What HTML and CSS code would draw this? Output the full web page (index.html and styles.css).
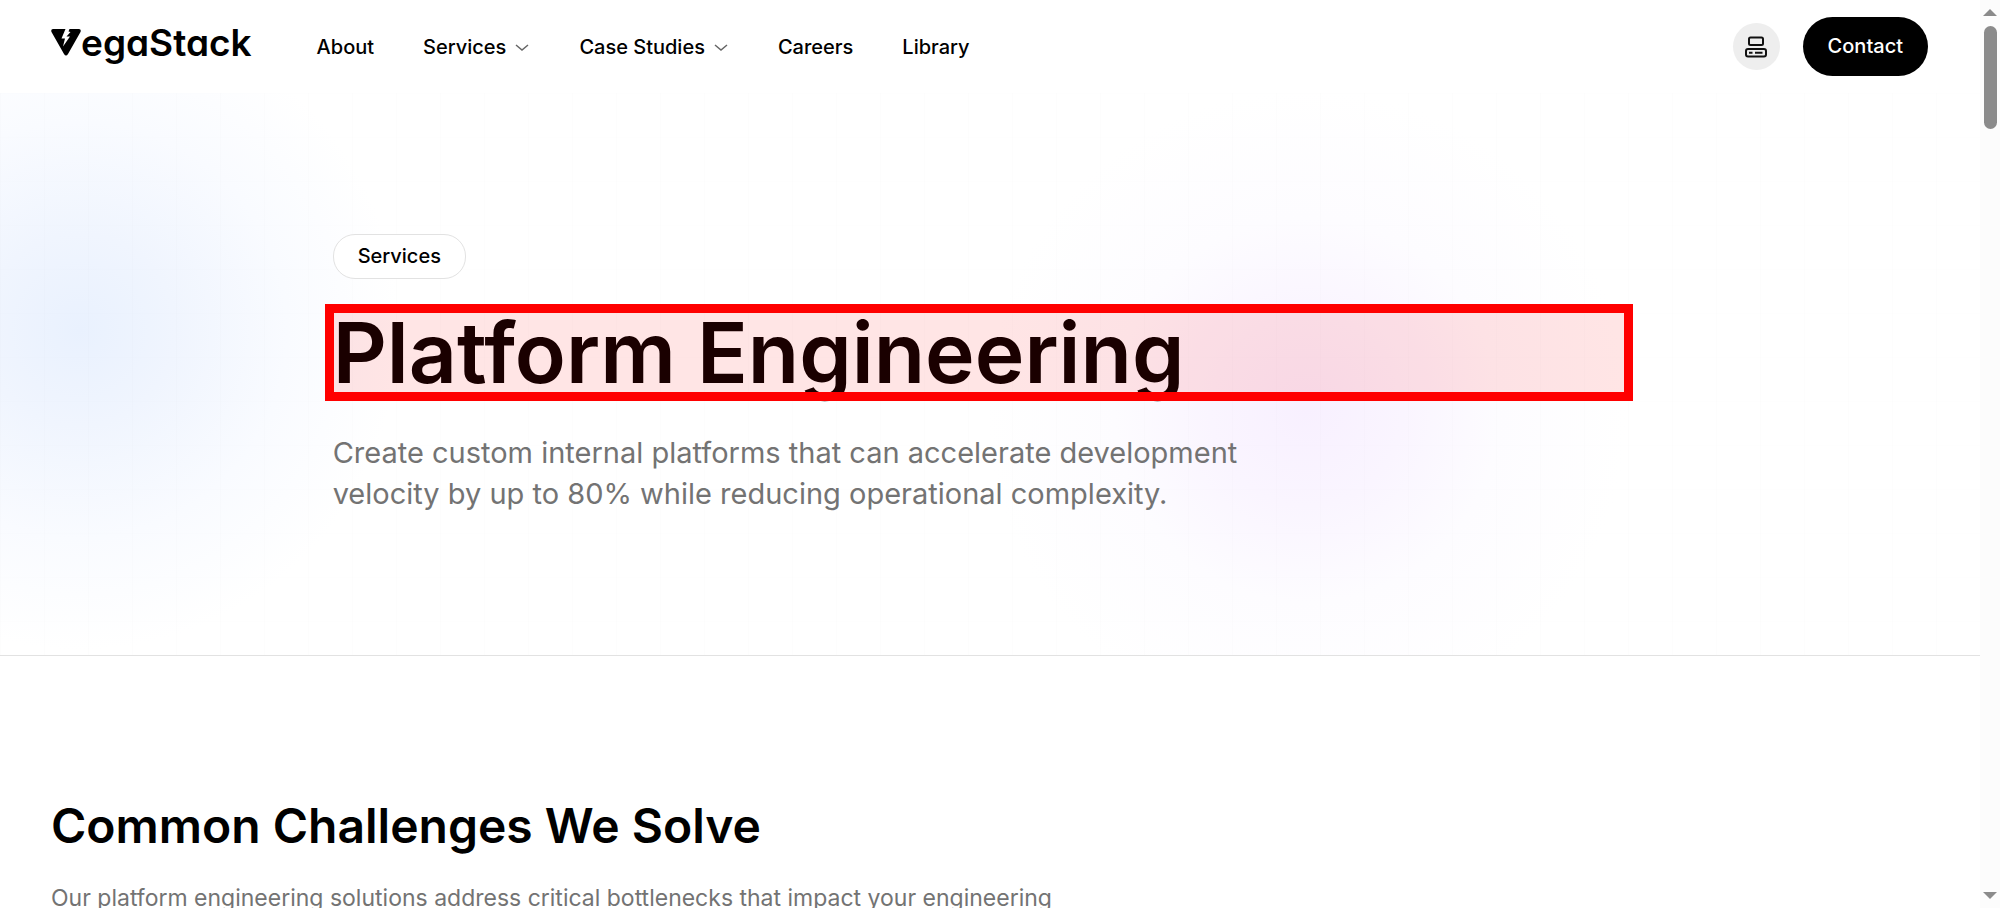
FILE: index.html
```html
<!DOCTYPE html>
<html lang="en">
<head>
<meta charset="utf-8">
<title>Platform Engineering – VegaStack</title>
<meta name="viewport" content="width=device-width, initial-scale=1">
<link rel="stylesheet" href="styles.css">
</head>
<body>
<div class="window">
  <div class="page">
    <header class="header">
      <a class="logo" href="#" aria-label="VegaStack">
        <svg class="logo-mark" viewBox="0 0 30 27" aria-hidden="true">
          <path d="M2 0H14.500L10.500 9.500H14L12 17.500L19 7.500H15.500L19.500 3L17.500 2.500L18.500 0H28Q30.500 .5 29.500 3L17 25Q15 28 13 25L.5 3Q-.5 .5 2 0Z"/>
        </svg>
        <span class="logo-text">egaStack</span>
      </a>
      <nav class="nav" aria-label="Main">
        <a class="nav-link" href="#">About</a>
        <button class="nav-menu" type="button">Services
          <svg class="chevron" viewBox="0 0 16 16" aria-hidden="true"><path d="M2 6l6 5 6-5"/></svg>
        </button>
        <button class="nav-menu" type="button">Case Studies
          <svg class="chevron" viewBox="0 0 16 16" aria-hidden="true"><path d="M2 6l6 5 6-5"/></svg>
        </button>
        <a class="nav-link" href="#">Careers</a>
        <a class="nav-link" href="#">Library</a>
      </nav>
      <div class="actions">
        <button class="theme" type="button" aria-label="Switch theme">
          <svg class="theme-icon" viewBox="0 0 24 24" aria-hidden="true">
            <rect x="5" y="2.500" width="14" height="7.500" rx="1.500"/>
            <rect x="2" y="14" width="20" height="7.500" rx="2"/>
            <path d="M5 17.800h3.500M11 17.800h7.500"/>
          </svg>
        </button>
        <a class="contact" href="#">Contact</a>
      </div>
    </header>
    <main>
      <section class="hero">
        <div class="hero-inner">
          <span class="badge">Services</span>
          <h1 class="title">Platform Engineering</h1>
          <p class="lead">Create custom internal platforms that can accelerate development velocity by up to 80% while reducing operational complexity.</p>
        </div>
      </section>
      <section class="challenges">
        <h2 class="subtitle">Common Challenges We Solve</h2>
        <p class="intro">Our platform engineering solutions address critical bottlenecks that impact your engineering</p>
      </section>
    </main>
  </div>
  <div class="scrollbar" aria-hidden="true">
    <svg class="arrow" viewBox="0 0 14 7"><path d="M0 7L7 0l7 7z"/></svg>
    <div class="thumb"></div>
    <svg class="arrow arrow-down" viewBox="0 0 14 7"><path d="M0 0h14L7 7z"/></svg>
  </div>
</div>
</body>
</html>
```
FILE: styles.css
```css
* { box-sizing: border-box; }

body {
  margin: 0;
  background: #fff;
  color: #000;
  font-family: Inter, "Liberation Sans", sans-serif;
  font-size: 20px;
}

h1, h2, p { margin: 0; }
a { color: inherit; text-decoration: none; }
button { border: 0; padding: 0; background: none; color: inherit; font: inherit; }

.window {
  display: grid;
  grid-template-columns: minmax(0, 1fr) 20px;
  height: 100vh;
  overflow: hidden;
}
.page { min-height: 0; overflow: hidden; }

.header {
  display: flex;
  align-items: center;
  height: 93px;
  padding: 0 52px 0 51px;
}
.logo { display: flex; align-items: center; padding-bottom: 8px; }
.logo-mark { width: 30px; height: 27px; }
.logo-text {
  font-size: 37px;
  font-weight: 600;
  line-height: 48px;
  font-feature-settings: "cv11";
}
.nav {
  display: flex;
  align-items: center;
  gap: 49px;
  margin-left: 65px;
  font-weight: 500;
}
.nav-menu { display: flex; align-items: center; gap: 8px; }
.chevron { width: 16px; height: 16px; fill: none; stroke: #666; stroke-width: 1.5; }

.actions { display: flex; align-items: center; gap: 23px; margin-left: auto; }
.theme {
  display: grid;
  place-items: center;
  width: 47px;
  height: 47px;
  border-radius: 50%;
  background: #eee;
}
.theme-icon { width: 24px; height: 24px; fill: none; stroke: #111; stroke-width: 2; }
.contact {
  padding: 17px 25px;
  border-radius: 30px;
  background: #000;
  color: #fff;
  font-weight: 500;
  line-height: 25px;
}

.hero {
  padding: 141px 16.8%;
  border-bottom: 1px solid #e2e2e2;
  background:
    linear-gradient(90deg, rgba(0, 0, 0, .006) 1px, transparent 1px) 0 0 / 44px 44px,
    linear-gradient(rgba(0, 0, 0, .004) 1px, transparent 1px) 0 0 / 44px 44px,
    radial-gradient(circle 320px at 4% 237px, #e9f1fe 0%, #f0f5fe 30%, #f9fbff 65%, transparent 100%),
    radial-gradient(circle 320px at 66% 317px, #f8f0ff 0%, #faf5ff 30%, #fdfcff 60%, transparent 100%);
}
.badge {
  display: inline-block;
  padding: 9px 24px;
  border: 1px solid #e2e2e2;
  border-radius: 22px;
  background: #fff;
  font-weight: 500;
  line-height: 25px;
  vertical-align: top;
}
.title {
  position: relative;
  margin-top: 30px;
  font-size: 84px;
  font-weight: 600;
  line-height: 88px;
}
.title::after {
  content: "";
  position: absolute;
  inset: -5px 14px -4px -8px;
  border: 9px solid #f00;
  background: rgba(255, 0, 0, .1);
}
.lead {
  max-width: 980px;
  margin-top: 35px;
  color: #737373;
  font-size: 29px;
  line-height: 41px;
}

.challenges { padding: 140px 51px; }
.subtitle { font-size: 48px; font-weight: 600; line-height: 60px; }
.intro { margin-top: 24px; color: #737373; font-size: 23px; line-height: 36px; }

.scrollbar {
  display: flex;
  flex-direction: column;
  align-items: center;
  padding: 9px 0;
  background: #fcfcfc;
}
.thumb { width: 13px; height: 103px; margin-top: 10px; border-radius: 7px; background: #8b8b8b; }
.arrow { width: 14px; height: 7px; fill: #8b8b8b; }
.arrow-down { margin-top: auto; }
```
